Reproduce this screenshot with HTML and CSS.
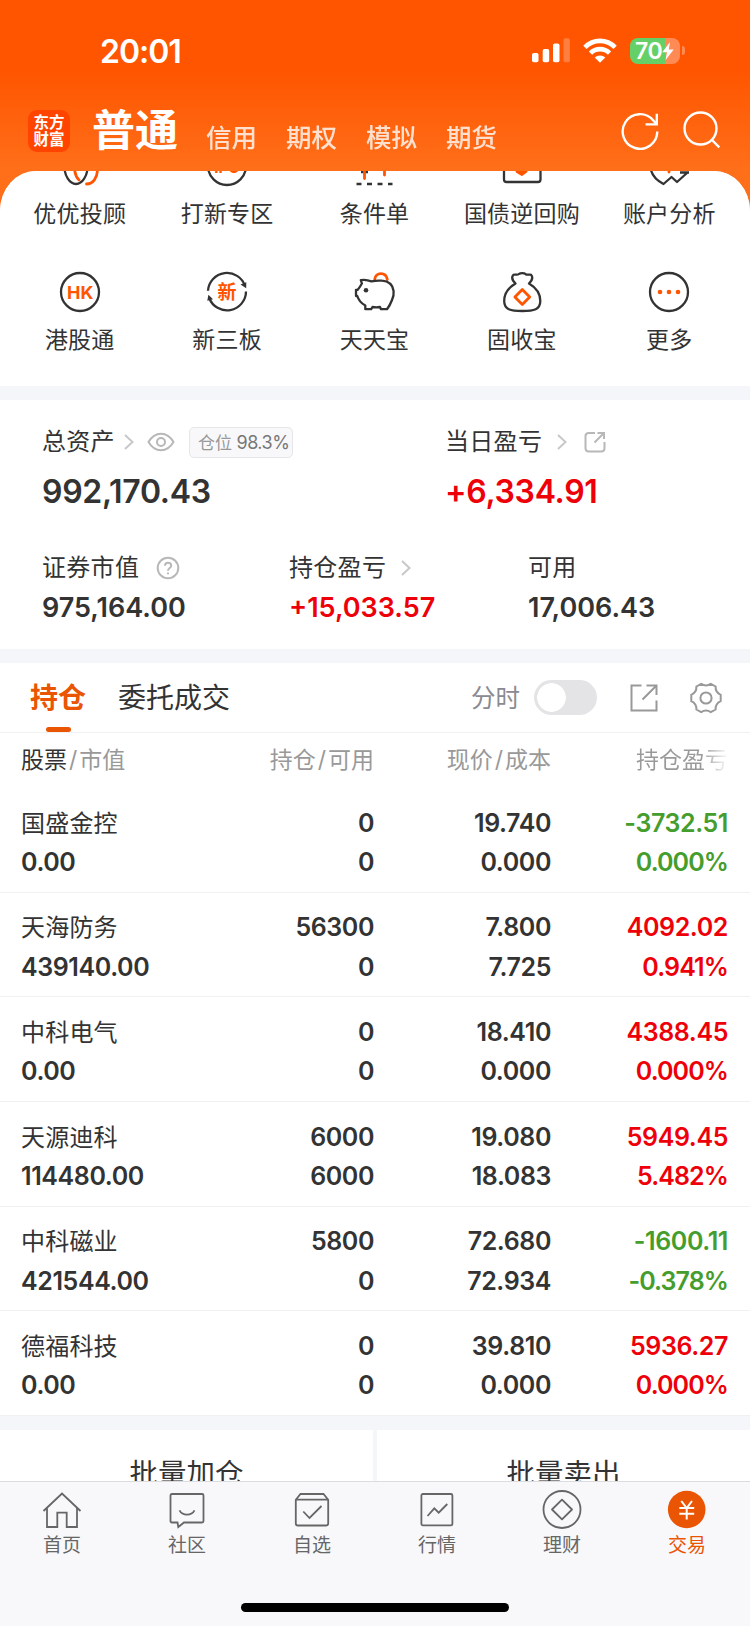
FILE: index.html
```html
<!DOCTYPE html>
<html lang="zh-CN">
<head>
  <meta charset="UTF-8">
  <meta name="viewport" content="width=device-width, initial-scale=1.0">
  <title>交易</title>
  <link rel="stylesheet" href="styles.css">
</head>
<body>

  <div class="status-bar">
    <div class="time">20:01</div>
    <div class="status-icons">
      <svg class="signal" width="38" height="25" viewBox="0 0 38 25" fill="#fff">
        <rect x="0" y="15" width="6.5" height="9.3" rx="1.8"/>
        <rect x="10.7" y="11" width="6.5" height="13.3" rx="1.8"/>
        <rect x="21" y="5.5" width="6.5" height="18.8" rx="1.8"/>
        <rect x="31.5" y="0.3" width="6.3" height="24" rx="1.8" opacity="0.25"/>
      </svg>
      <svg class="wifi" width="34" height="25" viewBox="0 0 34 25" fill="none" stroke="#fff" stroke-width="4.6">
        <path d="M1.9 9.3C10.3 0.7 23.7 0.7 32.1 9.3"/>
        <path d="M7.5 15.1C12.8 9.8 21.2 9.8 26.5 15.1"/>
        <path d="M17 24.8L11.7 19.5C14.6 16.7 19.4 16.7 22.3 19.5Z" fill="#fff" stroke="none"/>
      </svg>
      <div class="battery">
        <div class="battery-body">
          <span>70</span>
          <svg width="12" height="18" viewBox="0 0 12 18" fill="#fff"><path d="M8 0L0.3 10.2H5L3.6 18L11.7 7.4H6.8Z"/></svg>
        </div>
        <div class="battery-cap"></div>
      </div>
    </div>
  </div>

  <div class="top-nav">
    <div class="logo">东方<br>财富</div>
    <div class="account-tabs">
      <div class="account active">普通</div>
      <div class="account">信用</div>
      <div class="account">期权</div>
      <div class="account">模拟</div>
      <div class="account">期货</div>
    </div>
    <svg class="refresh" width="40" height="40" viewBox="0 0 40 40" fill="none" stroke="#fff" stroke-width="2.4">
      <path d="M37.3 20.6A17.3 17.3 0 1 1 33.3 9.4L36.6 13"/>
      <path d="M36.8 2.8V13.4H25.5"/>
    </svg>
    <svg class="search" width="40" height="40" viewBox="0 0 40 40" fill="none" stroke="#fff" stroke-width="2.4">
      <circle cx="18.5" cy="17.5" r="16"/>
      <path d="M29.5 28.5L37.3 36.3"/>
    </svg>
  </div>

  <div class="content">
    <div class="shortcuts">
      <div class="shortcut">
        <svg class="icon" viewBox="0 0 44 44">
          <ellipse class="ink" cx="18" cy="22" rx="11.6" ry="18"/>
          <path class="hot" d="M16.5 23C16.5 30 18 33 21 36M39.5 25C39.5 34 35 40 28.5 40"/>
        </svg>
        <span>优优投顾</span>
      </div>
      <div class="shortcut">
        <svg class="icon" viewBox="0 0 44 44">
          <circle class="ink" cx="22" cy="22" r="19"/>
          <text class="icon-text" x="22" y="29" font-size="15">IPO</text>
        </svg>
        <span>打新专区</span>
      </div>
      <div class="shortcut">
        <svg class="icon" viewBox="0 0 44 44">
          <path class="ink" d="M4.5 40H9.5M15 40H20M25.5 40H30.5M36 40H40.5M9 28H16"/>
          <path class="hot" d="M12.5 20V34.5M32.5 20V31"/>
        </svg>
        <span>条件单</span>
      </div>
      <div class="shortcut">
        <svg class="icon" viewBox="0 0 44 44">
          <rect class="ink" x="4" y="6" width="36.5" height="32" rx="2.5"/>
          <path class="hot" d="M17 27.5H26L22 30.5Z"/>
        </svg>
        <span>国债逆回购</span>
      </div>
      <div class="shortcut">
        <svg class="icon" viewBox="0 0 44 44">
          <path class="ink" d="M3.5 23C4 30 8 35.5 16.5 40L24.5 33L30 38L40 29M33 28.5H42"/>
          <path class="hot" d="M22 20V28"/>
        </svg>
        <span>账户分析</span>
      </div>
      <div class="shortcut">
        <svg class="icon" viewBox="0 0 44 44">
          <circle class="ink" cx="22" cy="22" r="19"/>
          <text class="icon-text" x="22.3" y="28.6" font-size="18">HK</text>
        </svg>
        <span>港股通</span>
      </div>
      <div class="shortcut">
        <svg class="icon" viewBox="0 0 44 44">
          <path class="ink" d="M3 20.8A19 19 0 0 1 40 16M41 21.5A19 19 0 0 1 4.2 28"/>
          <path d="M35.5 14.5L41.3 12.2L41.2 18.3ZM2.3 30.8L3.4 24.8L8 29.3Z" fill="#333"/>
          <text class="icon-text" x="22" y="28.6" font-size="19">新</text>
        </svg>
        <span>新三板</span>
      </div>
      <div class="shortcut">
        <svg class="icon" viewBox="0 0 44 44">
          <path class="hot" d="M22.7 9.3C23.5 2 34 1.5 35.3 9.5"/>
          <path class="ink" d="M8.8 10.2L9.9 13.5C8.7 15.5 7.5 18 5.6 19.8H4V26H5.3C6.5 30 9 33.2 13.3 35.5V39.2H19.2L20.5 37C23 37.4 25.5 37.4 28 37L29 39.2H35C37.5 36 38.7 33.5 40 30C41.4 27 42 24.5 41.6 21C40.8 15 36.5 11.2 30 10.7C26 10.3 23 10.6 19.5 11.4C16 10 12.5 9.2 8.8 10.2Z"/>
          <circle cx="14" cy="20.3" r="2.3" fill="#333"/>
        </svg>
        <span>天天宝</span>
      </div>
      <div class="shortcut">
        <svg class="icon" viewBox="0 0 44 44">
          <path class="ink" d="M15.5 13.5C13 11 10.8 7.5 13.5 4.8C15 4 17 5.5 18.7 4.2C20.5 2.7 24 2.7 25.7 4.2C27.5 5.5 29.5 4 31 4.8C33.5 7.5 31.5 11 29 13.5C35 17 40.3 22 40.3 31C40.3 39.5 34 41 22.3 41C10.5 41 4.2 39.5 4.2 31C4.2 22 9.5 17 15.5 13.5Z"/>
          <path class="hot" d="M22.3 19.6L29.7 27L22.3 34.4L14.9 27Z"/>
        </svg>
        <span>固收宝</span>
      </div>
      <div class="shortcut">
        <svg class="icon" viewBox="0 0 44 44">
          <circle class="ink" cx="22" cy="22" r="19"/>
          <g fill="#ff5500"><circle cx="13" cy="22" r="2.3"/><circle cx="22" cy="22" r="2.3"/><circle cx="31" cy="22" r="2.3"/></g>
        </svg>
        <span>更多</span>
      </div>
    </div>

    <div class="assets">
      <div class="asset-row main">
        <div class="asset">
          <div class="label">总资产
            <svg class="arrow" width="10" height="16" viewBox="0 0 10 16"><path d="M1 1L8.5 8L1 15"/></svg>
            <svg class="eye" width="28" height="20" viewBox="0 0 28 20"><path d="M1.5 10C8 -1 20 -1 26.5 10C20 21 8 21 1.5 10Z"/><circle cx="14" cy="10" r="4"/></svg>
            <span class="badge"><span>仓位</span> 98.3%</span>
          </div>
          <div class="value">992,170.43</div>
        </div>
        <div class="asset">
          <div class="label">当日盈亏
            <svg class="arrow wide" width="10" height="16" viewBox="0 0 10 16"><path d="M1 1L8.5 8L1 15"/></svg>
            <svg class="share" width="22" height="22" viewBox="0 0 22 22"><path d="M11 2H5Q1.5 2 1.5 5V17Q1.5 20.5 5 20.5H17Q20.5 20.5 20.5 17V11M13.5 2H20V8M19.5 2.5L10.5 11.5"/></svg>
          </div>
          <div class="value red">+6,334.91</div>
        </div>
      </div>
      <div class="asset-row sub">
        <div class="asset">
          <div class="label">证券市值
            <svg class="help" width="24" height="24" viewBox="0 0 24 24"><circle cx="12" cy="12" r="10.3"/><path d="M9 9.8C9 5.7 15.2 5.8 15.2 9.7C15.2 12 12 12 12 14.8M12 16.6V18.2"/></svg>
          </div>
          <div class="value">975,164.00</div>
        </div>
        <div class="asset">
          <div class="label">持仓盈亏
            <svg class="arrow wide" width="10" height="16" viewBox="0 0 10 16"><path d="M1 1L8.5 8L1 15"/></svg>
          </div>
          <div class="value red">+15,033.57</div>
        </div>
        <div class="asset">
          <div class="label">可用</div>
          <div class="value">17,006.43</div>
        </div>
      </div>
    </div>

    <div class="holdings">
      <div class="tabs">
        <div class="tab active">持仓</div>
        <div class="tab">委托成交</div>
        <div class="tools">
          <span>分时</span>
          <div class="switch"></div>
          <svg class="open" width="28" height="28" viewBox="0 0 28 28"><path d="M11.5 1.5H1.5V26.5H26.5V16.5M16.5 1.5H26.5V11M26 2L12.5 15.5"/></svg>
          <svg class="gear" width="34" height="32" viewBox="0 0 34 32"><path d="M12.2 1.8Q17 5 21.8 1.8L26.6 4.5Q26.3 10.3 31.7 12.8V19.2Q26.3 21.7 26.6 27.5L21.8 30.2Q17 27 12.2 30.2L7.4 27.5Q7.7 21.7 2.3 19.2V12.8Q7.7 10.3 7.4 4.5Z"/><circle cx="17" cy="16" r="5.6"/></svg>
        </div>
      </div>

      <div class="row head">
        <div><b>股票</b><i>/</i>市值</div>
        <div>持仓<i>/</i>可用</div>
        <div>现价<i>/</i>成本</div>
        <div class="fade">持仓盈亏</div>
      </div>
      <div class="row">
        <div><span class="name">国盛金控</span><span>0.00</span></div>
        <div><span>0</span><span>0</span></div>
        <div><span>19.740</span><span>0.000</span></div>
        <div class="green"><span>-3732.51</span><span class="rate">0.000%</span></div>
      </div>
      <div class="row">
        <div><span class="name">天海防务</span><span>439140.00</span></div>
        <div><span>56300</span><span>0</span></div>
        <div><span>7.800</span><span>7.725</span></div>
        <div class="red"><span>4092.02</span><span class="rate">0.941%</span></div>
      </div>
      <div class="row">
        <div><span class="name">中科电气</span><span>0.00</span></div>
        <div><span>0</span><span>0</span></div>
        <div><span>18.410</span><span>0.000</span></div>
        <div class="red"><span>4388.45</span><span class="rate">0.000%</span></div>
      </div>
      <div class="row">
        <div><span class="name">天源迪科</span><span>114480.00</span></div>
        <div><span>6000</span><span>6000</span></div>
        <div><span>19.080</span><span>18.083</span></div>
        <div class="red"><span>5949.45</span><span class="rate">5.482%</span></div>
      </div>
      <div class="row">
        <div><span class="name">中科磁业</span><span>421544.00</span></div>
        <div><span>5800</span><span>0</span></div>
        <div><span>72.680</span><span>72.934</span></div>
        <div class="green"><span>-1600.11</span><span class="rate">-0.378%</span></div>
      </div>
      <div class="row">
        <div><span class="name">德福科技</span><span>0.00</span></div>
        <div><span>0</span><span>0</span></div>
        <div><span>39.810</span><span>0.000</span></div>
        <div class="red"><span>5936.27</span><span class="rate">0.000%</span></div>
      </div>
    </div>

    <div class="batch">
      <div>批量加仓</div>
      <div>批量卖出</div>
    </div>
  </div>

  <div class="tab-bar">
    <div class="items">
      <div class="item">
        <svg viewBox="0 0 40 40"><path d="M1.5 21L20 3.5L38.5 21M5 18V37H15.3V22.7H24.7V37H35V18"/></svg>
        <span>首页</span>
      </div>
      <div class="item">
        <svg viewBox="0 0 40 40"><path d="M5 4H35Q36.5 4 36.5 5.5V31Q36.5 32.5 35 32.5H17L11.3 37L10.5 32.5H5Q3.5 32.5 3.5 31V5.5Q3.5 4 5 4ZM12.5 20.3C15.5 26 24.5 26 27.5 20.3"/></svg>
        <span>社区</span>
      </div>
      <div class="item">
        <svg viewBox="0 0 40 40"><path d="M3.8 9.7L8.5 4H31.5L36.2 9.7V33.5Q36.2 35.5 34.2 35.5H5.8Q3.8 35.5 3.8 33.5ZM4 9.7H36M11.3 21.5L17.5 28L29.5 16"/></svg>
        <span>自选</span>
      </div>
      <div class="item">
        <svg viewBox="0 0 40 40"><rect x="4.4" y="4" width="31" height="31.3" rx="1.5"/><path d="M10.5 26L17.3 18.3L21.7 22.7L30.3 14"/></svg>
        <span>行情</span>
      </div>
      <div class="item">
        <svg viewBox="0 0 40 40"><circle cx="20" cy="19.5" r="18.5"/><path d="M20 9.7L30 19.5L20 29.3L10 19.5Z" stroke-linejoin="round"/></svg>
        <span>理财</span>
      </div>
      <div class="item active">
        <svg viewBox="0 0 40 40"><circle class="coin" cx="19.7" cy="19.5" r="18.8"/><path class="yen" d="M14.3 11L19.7 18L25 11M19.7 18V29.5M12.3 18H27.2M12.3 23.7H27.2"/></svg>
        <span>交易</span>
      </div>
    </div>
    <div class="home-indicator"></div>
  </div>

</body>
</html>
```
FILE: styles.css
```css
* {
  margin: 0;
  padding: 0;
  box-sizing: border-box;
}

body {
  width: 750px;
  height: 1626px;
  overflow: hidden;
  display: flex;
  flex-direction: column;
  font-family: Inter, "Noto Sans CJK SC", sans-serif;
  color: #333;
  background: linear-gradient(#ff5500 0, #ff5500 70px, #ff6f1a 171px, #ff6f1a 240px, #f5f6f9 240px);
}

svg {
  display: block;
  flex-shrink: 0;
}

.red {
  color: #ee0009;
}

.green {
  color: #449d2c;
}

/* status bar */
.status-bar {
  height: 100px;
  padding: 0 65px 0 100px;
  display: flex;
  justify-content: space-between;
  align-items: center;
  color: #fff;
}

.time {
  font-size: 32px;
  font-weight: 600;
  line-height: 40px;
  letter-spacing: -1px;
  margin-top: 3px;
}

.status-icons {
  display: flex;
  align-items: center;
  margin-top: 1px;
}

.wifi {
  margin: 0 13px 0 13px;
}

.battery {
  display: flex;
  align-items: center;
  gap: 2px;
}

.battery-body {
  width: 50px;
  height: 26px;
  border-radius: 8px;
  background: linear-gradient(90deg, #65d067 0 35px, #ff8a54 35px);
  display: flex;
  align-items: center;
  padding-left: 5px;
  font-size: 23px;
  font-weight: 600;
  line-height: 26px;
}

.battery-body span {
  letter-spacing: -0.5px;
}

.battery-cap {
  width: 3px;
  height: 9px;
  border-radius: 0 4px 4px 0;
  background: #ff8a54;
}

/* account switcher */
.top-nav {
  height: 71px;
  padding: 0 28px;
  display: flex;
  align-items: flex-start;
  color: #fff;
}

.logo {
  width: 42px;
  height: 42px;
  padding-top: 4px;
  margin-top: 10px;
  border-radius: 9px;
  background: #ff4400;
  text-align: center;
  font-size: 15.5px;
  font-weight: 700;
  line-height: 17px;
}

.account-tabs {
  flex: 1;
  display: flex;
  gap: 29px;
  margin-left: 22px;
  line-height: 60px;
}

.account {
  font-size: 25.5px;
  font-weight: 500;
  opacity: 0.8;
  padding-top: 8px;
}

.account.active {
  font-size: 43px;
  font-weight: 700;
  opacity: 1;
  padding-top: 0;
  margin-right: -1px;
}

.refresh {
  margin: 11px 22px 0 0;
}

.search {
  margin-top: 11px;
}

.content {
  flex: 1;
  min-height: 0;
  overflow: hidden;
  border-radius: 36px 36px 0 0 / 40px 40px 0 0;
  background: #f5f6f9;
}

/* shortcuts, first row scrolled under the header */
.shortcuts {
  margin-top: -27px;
  height: 242px;
  padding: 0 7px 0 6px;
  background: #fff;
  display: grid;
  grid-template-columns: repeat(5, 1fr);
  grid-auto-rows: 126px;
}

.shortcut {
  display: flex;
  flex-direction: column;
  align-items: center;
}

.shortcut span {
  font-size: 23px;
  line-height: 30px;
  margin-top: 11px;
  letter-spacing: 0.2px;
  white-space: nowrap;
}

.icon {
  width: 44px;
  height: 44px;
  fill: none;
}

.ink {
  stroke: #333;
  stroke-width: 2.3;
  stroke-linejoin: round;
}

.hot {
  stroke: #ff5500;
  stroke-width: 2.8;
  stroke-linecap: round;
  stroke-linejoin: round;
}

.icon-text {
  fill: #ff5500;
  font-weight: 700;
  text-anchor: middle;
}

/* assets */
.assets {
  height: 249px;
  margin-top: 14px;
  padding: 24px 0 0 42px;
  background: #fff;
}

.asset-row {
  display: grid;
}

.asset-row.main {
  grid-template-columns: 403px 1fr;
  height: 126px;
}

.asset-row.sub {
  grid-template-columns: 247px 239px 1fr;
}

.label {
  height: 36px;
  display: flex;
  align-items: center;
  font-size: 24px;
  line-height: 36px;
  letter-spacing: 0.3px;
  white-space: nowrap;
}

.label svg {
  fill: none;
  stroke: #b8b8b8;
  stroke-width: 2;
}

.label .arrow {
  stroke: #c8c8c8;
  margin-left: 9px;
}

.label .arrow.wide {
  margin-left: 15px;
}

.label .eye {
  margin-left: 13px;
}

.label .share {
  margin-left: 17px;
}

.label .help {
  margin-left: 17px;
}

.badge {
  height: 31px;
  margin-left: 14px;
  padding: 0 3px 0 8px;
  border: 1px solid #e6e6e9;
  border-radius: 5px;
  background: #f8f8fb;
  font-size: 18px;
  line-height: 30px;
  letter-spacing: -0.5px;
  color: #777;
}

.badge span {
  font-size: 17px;
  letter-spacing: 0;
  color: #999;
}

.value {
  font-weight: 600;
}

.main .value {
  font-size: 32px;
  line-height: 40px;
  margin-top: 12px;
  letter-spacing: -0.3px;
}

.sub .value {
  font-size: 27px;
  line-height: 36px;
  margin-top: 4px;
}

/* holdings */
.holdings {
  margin-top: 14px;
  background: #fff;
}

.tabs {
  height: 70px;
  padding: 0 27px 0 30px;
  border-bottom: 1px solid #f1f1f3;
  display: flex;
  font-size: 28px;
  line-height: 70px;
}

.tab {
  margin-right: 32px;
}

.tab.active {
  position: relative;
  color: #ea5504;
  font-weight: 700;
}

.tab.active::after {
  content: "";
  position: absolute;
  left: 16px;
  bottom: 0;
  width: 25px;
  height: 5px;
  border-radius: 3px;
  background: #ea5504;
}

.tools {
  margin-left: auto;
  display: flex;
  align-items: center;
  font-size: 24.5px;
  color: #8a8a92;
}

.tools svg {
  fill: none;
  stroke: #999;
  stroke-width: 2;
}

.switch {
  width: 63px;
  height: 35px;
  margin: 0 33px 0 14px;
  border-radius: 18px;
  background: radial-gradient(circle at 17.5px 17.5px, #fff 14px, #e4e4e6 14.6px);
}

.open {
  margin-right: 31px;
}

.row {
  height: 104.7px;
  padding: 15.5px 22px 0 21px;
  border-bottom: 1px solid #f1f1f3;
  display: grid;
  grid-template-columns: 177px 176px 177px 177px;
  text-align: right;
  font-size: 25px;
  font-weight: 600;
  line-height: 39.4px;
  letter-spacing: -0.4px;
}

.row > div:first-child {
  text-align: left;
}

.row span {
  display: block;
}

.row .name {
  font-size: 24px;
  font-weight: 400;
  letter-spacing: 0.2px;
}

.row .rate {
  letter-spacing: -0.9px;
}

.row.head {
  height: 55px;
  padding-top: 8px;
  border: none;
  font-size: 23px;
  font-weight: 400;
  letter-spacing: 0;
  color: #999;
}

.head b {
  font-weight: 400;
  color: #333;
}

.head i {
  font-style: normal;
  margin: 0 2px;
}

.head .fade {
  color: transparent;
  background: linear-gradient(90deg, #999 150px, #fff 178px);
  background-clip: text;
  -webkit-background-clip: text;
}

.batch {
  margin-top: 14px;
  display: grid;
  grid-template-columns: 373px 373px;
  gap: 4px;
  text-align: center;
  font-size: 28.5px;
  line-height: 88px;
}

.batch div {
  background: #fff;
}

/* bottom tab bar */
.tab-bar {
  height: 145px;
  border-top: 1px solid #dcdce0;
  background: #f8f8fb;
}

.items {
  display: grid;
  grid-template-columns: repeat(6, 125px);
  height: 121px;
}

.item {
  display: flex;
  flex-direction: column;
  align-items: center;
  padding: 8px 1px 0 0;
  font-size: 19px;
  line-height: 26px;
  color: #666;
}

.item span {
  margin-top: 3px;
}

.item svg {
  width: 40px;
  height: 40px;
  fill: none;
  stroke: #666;
  stroke-width: 1.8;
}

.item.active {
  color: #ea5504;
}

.item .coin {
  fill: #ea5504;
  stroke: none;
}

.item .yen {
  stroke: #fff;
  stroke-width: 2;
}

.home-indicator {
  width: 268px;
  height: 9px;
  margin: 0 auto;
  border-radius: 5px;
  background: #000;
}
```
